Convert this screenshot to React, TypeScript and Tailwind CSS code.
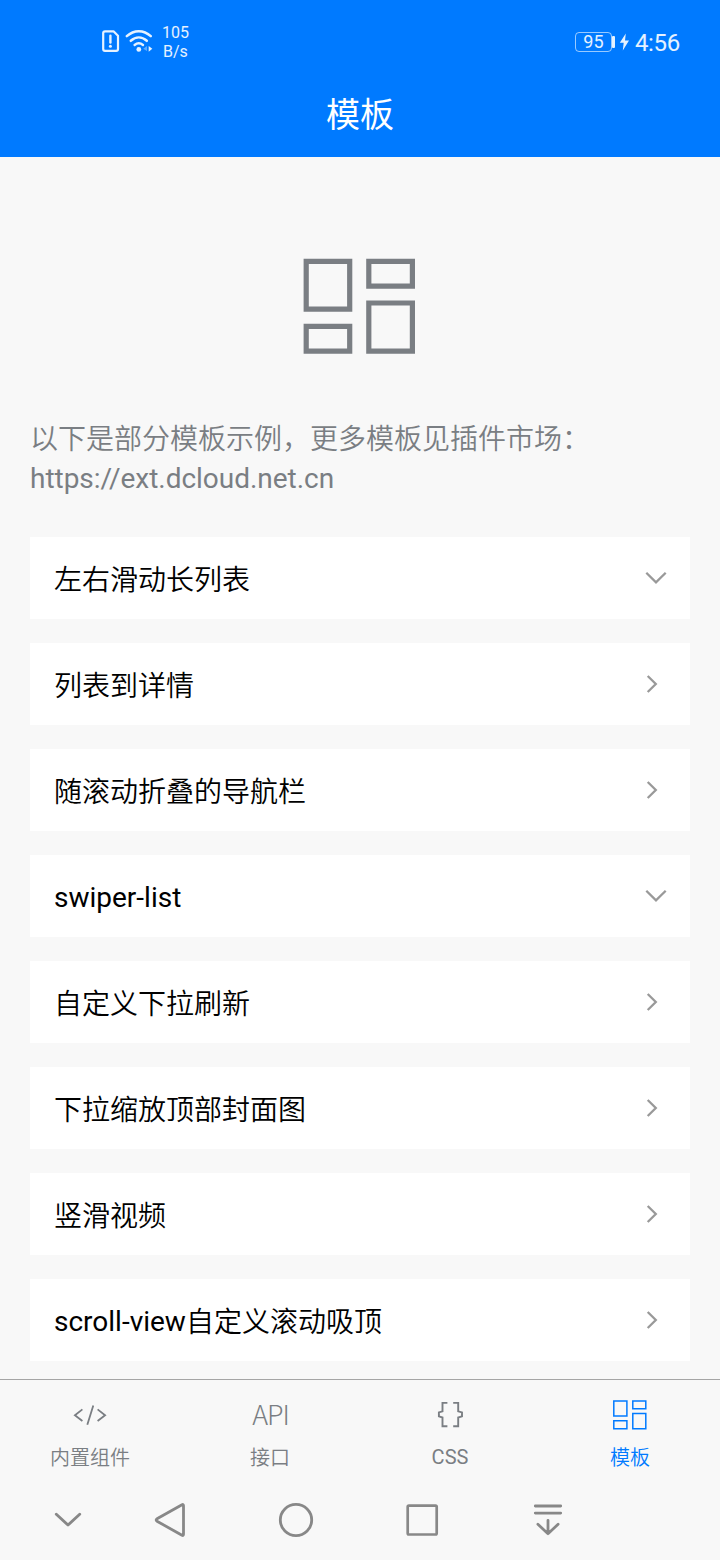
import React from "react";

type Row = { label: string; latin?: string; expandable?: boolean };

const rows: Row[] = [
  { label: "左右滑动长列表", expandable: true },
  { label: "列表到详情" },
  { label: "随滚动折叠的导航栏" },
  { label: "", latin: "swiper-list", expandable: true },
  { label: "自定义下拉刷新" },
  { label: "下拉缩放顶部封面图" },
  { label: "竖滑视频" },
  { label: "自定义滚动吸顶", latin: "scroll-view" },
];

function StatusBar() {
  return (
    <div className="flex h-[70px] shrink-0 items-start text-white/90">
      <svg className="ml-[98px] mt-[24px] shrink-0" width="60" height="34" viewBox="0 0 60 34" fill="none" stroke="currentColor">
        <path d="M7 7.3H15.5L20 11.8V25A1.8 1.8 0 0 1 18.2 26.8H7A1.8 1.8 0 0 1 5.2 25V9.1A1.8 1.8 0 0 1 7 7.3Z" strokeWidth="2.2" strokeLinejoin="round" />
        <path d="M12.4 11.8V18.6" strokeWidth="2.4" strokeLinecap="round" />
        <circle cx="12.4" cy="22.2" r="1.5" fill="currentColor" stroke="none" />
        <path d="M28.8 12.2C36 5.5 45.6 5.5 52.8 12.2" strokeWidth="2.5" strokeLinecap="round" />
        <path d="M32.8 16.8C37.8 12.3 43.8 12.3 48.8 16.8" strokeWidth="2.5" strokeLinecap="round" />
        <path d="M36.6 21C39.3 18.8 42.3 18.8 45 21" strokeWidth="2.4" strokeLinecap="round" />
        <circle cx="40.8" cy="25.4" r="2.4" fill="currentColor" stroke="none" />
        <path d="M49 22V27L45.2 24.7Z" fill="currentColor" opacity=".4" stroke="none" />
        <path d="M50.7 22V27.8L54.3 24.7Z" fill="currentColor" stroke="none" />
      </svg>
      <div className="ml-[4px] mt-[23px] text-[16px] leading-[19px]">
        <div>105</div>
        <div className="pl-px">B/s</div>
      </div>
      <div className="ml-auto mr-[40px] mt-[28px] flex items-center">
        <div className="flex h-[20px] w-[37px] items-center justify-center rounded-[4px] border-[1.5px] border-white/60 text-[18px] leading-[18px]">95</div>
        <div className="h-[12px] w-[3px] rounded-[1px] bg-white/90" />
        <svg className="ml-[4px]" width="11" height="18" viewBox="0 0 11 18" fill="currentColor">
          <path d="M6.8 0.5L0.8 9.8H4.7L3.8 17.4L10 7.6H6Z" />
        </svg>
        <span className="ml-[5px] h-[28px] text-[24px] leading-[30px] tracking-[-0.3px]">4:56</span>
      </div>
    </div>
  );
}

function Chevron({ down }: { down?: boolean }) {
  return (
    <svg className="shrink-0" width="40" height="30" viewBox="0 0 40 30" fill="none" stroke="#999999" strokeWidth="2.3">
      <path d={down ? "M6.3 9.8L16 19.3L25.7 9.8" : "M7.7 7L15.8 15L7.7 23"} />
    </svg>
  );
}

function TabCode() {
  return (
    <svg width="40" height="36" viewBox="0 0 40 36" fill="none" stroke="currentColor" strokeWidth="1.8">
      <path d="M12.4 12.4L4.9 18.2L12.4 24M27.6 12.4L35.1 18.2L27.6 24M23.3 8.6L17.3 27.8" />
    </svg>
  );
}

function TabBraces() {
  return (
    <svg width="40" height="36" viewBox="0 0 40 36" fill="none" stroke="currentColor" strokeWidth="1.9">
      <path d="M17.4 5.9H12.5V14.3L8.9 15.4V19.4L12.5 20.5V29.2H17.4M23.2 5.9H28.2V14.3L32 15.4V19.4L28.2 20.5V29.2H23.2" />
    </svg>
  );
}

function TabTemplate() {
  return (
    <svg width="40" height="36" viewBox="0 0 40 36" fill="none" stroke="currentColor" strokeWidth="1.5">
      <path d="M3.8 4H16.9V19H3.8ZM22.8 4H35.8V11.8H22.8ZM3.8 23.8H16.9V31.7H3.8ZM22.8 16.6H35.8V31.7H22.8Z" />
    </svg>
  );
}

function Tab({ label, active, latin, children }: { label: string; active?: boolean; latin?: boolean; children: React.ReactNode }) {
  return (
    <div className={`flex flex-1 flex-col items-center pt-[17px] ${active ? "text-[#007aff]" : "text-[#7a7e83]"}`}>
      <div className="flex h-[36px] items-center justify-center">{children}</div>
      <div className={latin ? "mt-[10px] text-[20px] leading-[28px]" : "mt-[11px] text-[20px] font-[350] leading-[28px]"}>{label}</div>
    </div>
  );
}

export default function App() {
  return (
    <div
      className="flex h-[1560px] w-[720px] flex-col overflow-hidden bg-[#f8f8f8] font-[Roboto,'Noto_Sans_CJK_SC',sans-serif]"
      lang="zh-CN"
    >
      <header className="flex h-[157px] shrink-0 flex-col bg-[#007aff]">
        <StatusBar />
        <h1 className="mt-[20px] text-center text-[34px] leading-[50px] text-white">模板</h1>
      </header>

      <main className="flex h-[1222px] shrink-0 flex-col overflow-hidden px-[30px]">
        <svg className="ml-[270px] mt-[98px] shrink-0" width="120" height="106" viewBox="0 0 120 106" fill="none" stroke="#7a7e83" strokeWidth="5.2">
          <path d="M6.2 6.4H49.7V54.2H6.2ZM68.8 6.4H112.4V31.2H68.8ZM6.2 71.4H49.7V96.2H6.2ZM68.8 48H112.4V96.2H68.8Z" />
        </svg>
        <div className="mt-[59px] text-[28px] text-[#7a7e83]">
          <p className="font-[350] leading-[40px]">以下是部分模板示例，更多模板见插件市场：</p>
          <p className="leading-[38px] tracking-[-0.03px]">https://ext.dcloud.net.cn</p>
        </div>
        <div className="mt-[39px] flex flex-col gap-6">
          {rows.map((row) => (
            <div key={row.label + row.latin} className="flex h-[82px] shrink-0 items-center justify-between bg-white pl-6 pr-[10px]">
              <span className={row.latin ? "flex pt-[4px] text-[28px] leading-[40px] text-black" : "flex pt-[6px] text-[28px] leading-[40px] text-black"}>
                {row.latin}
                <span className={row.latin ? "pt-px font-[350]" : "font-[350]"}>{row.label}</span>
              </span>
              <Chevron down={row.expandable} />
            </div>
          ))}
        </div>
      </main>

      <nav className="flex h-[101px] shrink-0 border-t border-[#a5a5a5]">
        <Tab label="内置组件">
          <TabCode />
        </Tab>
        <Tab label="接口">
          <span className="mb-[2px] pl-px font-['Noto_Sans_CJK_SC',sans-serif] text-[27px] font-light leading-[36px] tracking-[-1px]">API</span>
        </Tab>
        <Tab label="CSS" latin>
          <TabBraces />
        </Tab>
        <Tab label="模板" active>
          <TabTemplate />
        </Tab>
      </nav>

      <div className="flex h-[80px] shrink-0 items-center">
        <svg className="ml-[48px]" width="40" height="40" viewBox="0 0 40 40" fill="none" stroke="#888888" strokeWidth="2.9" strokeLinecap="round" strokeLinejoin="round">
          <path d="M8.3 14.3L20 25L31.7 14.3" />
        </svg>
        <svg className="ml-[62px]" width="40" height="40" viewBox="0 0 40 40" fill="none" stroke="#888888" strokeWidth="2.8" strokeLinejoin="round">
          <path d="M32 4.7L7 18.8Q5.3 20 7 21.2L32 35.3Q33.5 36 33.5 34.3V5.7Q33.5 4 32 4.7Z" />
        </svg>
        <svg className="ml-[86px]" width="40" height="40" viewBox="0 0 40 40" fill="none" stroke="#888888" strokeWidth="2.8">
          <circle cx="20" cy="20" r="15.7" />
        </svg>
        <svg className="ml-[86px]" width="40" height="40" viewBox="0 0 40 40" fill="none" stroke="#888888" strokeWidth="2.7">
          <rect x="5.7" y="5.7" width="29" height="28.8" rx="1.2" />
        </svg>
        <svg className="ml-[86px]" width="40" height="40" viewBox="0 0 40 40" fill="none" stroke="#888888" strokeWidth="2.8" strokeLinecap="round" strokeLinejoin="round">
          <path d="M7.3 6H32.7M7.3 13.1H32.7M20 20.3V33.7M9.9 24.3L20 33.7L30.1 24.3" />
        </svg>
      </div>
    </div>
  );
}
